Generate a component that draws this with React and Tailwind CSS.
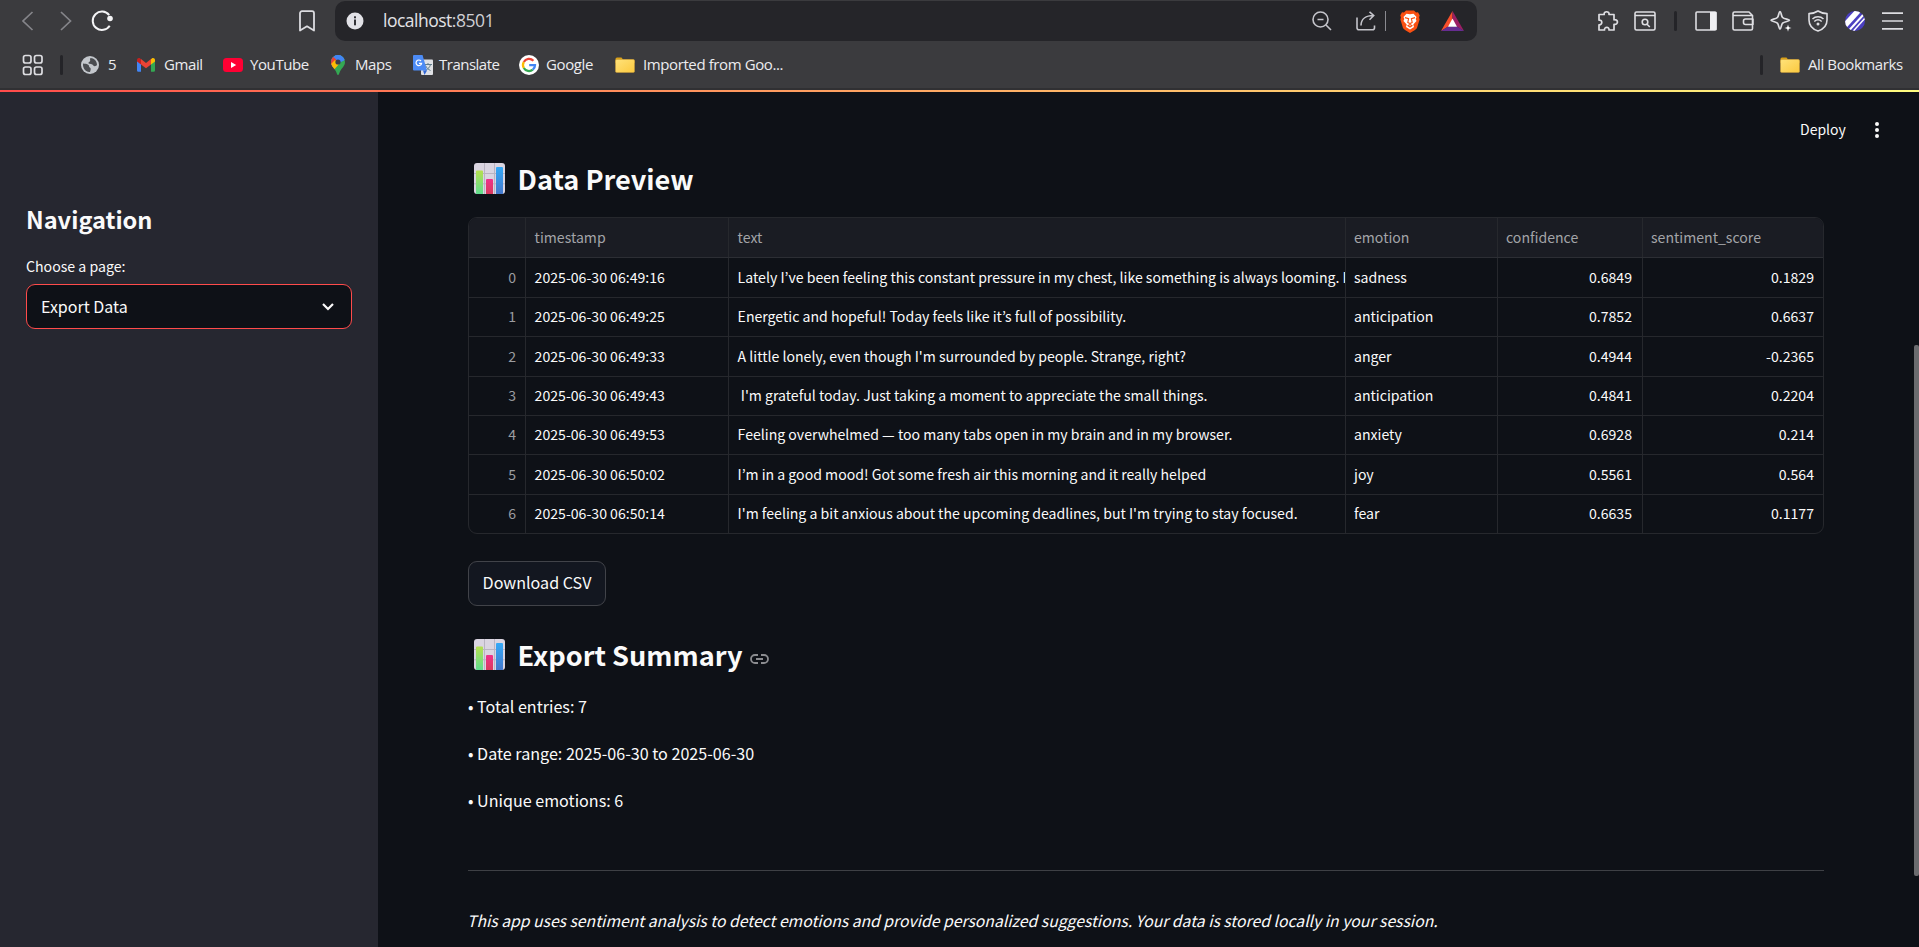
import React from "react";

const SS = "font-['Noto_Sans_CJK_KR',sans-serif]";

function Svg({ w, h, vb, className = "", children, ...rest }) {
  return (
    <svg width={w} height={h} viewBox={vb || `0 0 ${w} ${h}`} fill="none" className={"shrink-0 " + className} {...rest}>
      {children}
    </svg>
  );
}

function Folder({ className }) {
  return (
    <Svg w={20} h={16} className={className}>
      <path d="M0.5 2A1.5 1.5 0 0 1 2 0.5h4.5L8 2.5h10a1.5 1.5 0 0 1 1.500 1.500V6H0.500z" fill="#d9a017" />
      <rect x="0.500" y="2.500" width="19" height="13" rx="1.300" fill="url(#folder)" stroke="#c99a3a" strokeWidth="0.500" />
      <defs>
        <linearGradient id="folder" x1="0" y1="0" x2="1" y2="1">
          <stop stopColor="#ffe27a" />
          <stop offset="1" stopColor="#fbc93f" />
        </linearGradient>
      </defs>
    </Svg>
  );
}

function Toolbar() {
  return (
    <div className="flex h-[42px] items-center text-[#e8e8ec]">
      <Svg w={12} h={20} className="ml-[22px]"><path d="M10.500 1 1 10l9.500 9" stroke="#85858a" strokeWidth="1.700" /></Svg>
      <Svg w={12} h={20} className="ml-[26px]"><path d="M1 1l9.500 9L1 19" stroke="#85858a" strokeWidth="1.700" /></Svg>
      <Svg w={22} h={22} className="ml-[19px]">
        <path d="M18.700 15.700A9.200 9.200 0 1 1 18.200 5.100" stroke="#f4f4f6" strokeWidth="2" />
        <circle cx="19" cy="8.500" r="2.800" fill="#f4f4f6" />
      </Svg>
      <Svg w={16} h={22} className="ml-[186px]"><path d="M1 3.200A2 2 0 0 1 3 1.200h10a2 2 0 0 1 2 2V20.600l-7-4.300-7 4.300z" stroke="#dcdce0" strokeWidth="1.800" strokeLinejoin="round" /></Svg>
      <div className="ml-[20px] mt-px flex h-[40px] w-[1142px] items-center self-start rounded-[10px] bg-[#252529]">
        <Svg w={18} h={18} className="ml-[11px]">
          <circle cx="9" cy="9" r="8.500" fill="#e2e2e7" />
          <rect x="8" y="7.500" width="2" height="5.800" fill="#333338" />
          <rect x="8" y="4.300" width="2" height="2" fill="#333338" />
        </Svg>
        <span className="ml-[19px] block w-[920px] whitespace-nowrap pb-[2px] font-['Open_Sans',sans-serif] text-[17.500px] leading-[24px] tracking-[-0.500px] text-[#e2e2e6]"><span>localhost</span><span className="text-[#cfcfd4]">:8501</span></span>
        <Svg w={20} h={20} className="ml-[9px]">
          <circle cx="8.500" cy="8.500" r="7.500" stroke="#c4c4ca" strokeWidth="1.600" />
          <path d="M5.500 8.500h6M14 14l5 5" stroke="#c4c4ca" strokeWidth="1.600" />
        </Svg>
        <Svg w={20} h={20} className="ml-[24px]">
          <path d="M1 6.500V16.800a2 2 0 0 0 2 2h13.500a2 2 0 0 0 2-2V14.500M5 14.500C5 8 10 4.500 17.500 4.500M13.500 0.800 17.700 4.500l-4.200 4.200" stroke="#c4c4ca" strokeWidth="1.600" />
        </Svg>
        <div className="ml-[9px] h-[20px] w-px bg-[#8a8a90]" />
        <Svg w={20} h={23} className="ml-[14px]">
          <path d="M6 0.500h8l2 2 2-.2 1.700 3-.6 2.200.5 2-2.600 8.500c-.5 1.300-3.500 3-7 5-3.500-2-6.500-3.700-7-5L.4 9.500l.5-2L.3 5.300l1.700-3 2 .2z" fill="#fb5012" />
          <path d="M6.500 3.700 10 4.300l3.500-.6 3 3.300-.8 2 .8 2-3.200 3.600L14 17l-4 2.600L6 17l.7-2.400L3.500 11l.8-2-.8-2z" fill="#fff" />
          <path d="M5 7.600l3.600 1-.8 3.800L10 13.600l2.200-1.200-.8-3.800 3.600-1M8 15.800l2-1.300 2 1.300-2 1.200z" stroke="#fb5012" strokeWidth="1.100" />
        </Svg>
        <Svg w={23} h={20} className="ml-[21px]">
          <path d="M11.500 0 0 20 11.500 13z" fill="#f94f2a" />
          <path d="M11.500 0 23 20 11.500 13z" fill="#9b1f63" />
          <path d="M0 20h23l-7-4.500H7z" fill="#662d91" />
          <path d="M11.500 7.500 16 15.800H7z" fill="#fff" />
        </Svg>
      </div>
      <Svg w={22} h={22} className="ml-[120px]">
        <path d="M2 4.500h5.200c-.8-3.700 5.600-3.700 4.800 0h5v5.300c4.600-.8 4.600 5.300 0 4.500v5.700h-5c.6-3.600-5-3.600-4.500 0H2v-5.200c3.700.4 3.700-5.200 0-4.700z" stroke="#dedee2" strokeWidth="1.700" strokeLinejoin="round" />
      </Svg>
      <Svg w={22} h={20} className="ml-[15px]">
        <rect x="1" y="1" width="20" height="18" rx="1.500" stroke="#dedee2" strokeWidth="1.600" />
        <path d="M1 4.500h20M12.800 13l3 3" stroke="#dedee2" strokeWidth="1.600" />
        <circle cx="11" cy="11" r="2.800" stroke="#dedee2" strokeWidth="1.600" />
      </Svg>
      <div className="ml-[18px] h-[20px] w-[3px] rounded bg-[#242428]" />
      <Svg w={22} h={20} className="ml-[18px]">
        <rect x="1" y="1" width="20" height="18" rx="1" stroke="#dedee2" strokeWidth="1.600" />
        <rect x="15" y="1" width="6.500" height="18" fill="#f0f0f3" />
      </Svg>
      <Svg w={22} h={20} className="ml-[15px]">
        <path d="M1 2.500A1.500 1.500 0 0 1 2.500 1H17l3.500 3.500V17.500A1.500 1.500 0 0 1 19 19H2.500A1.500 1.500 0 0 1 1 17.500zM1 4.500h19M21 8h-7.500a2 2 0 0 0-2 2v1.500a2 2 0 0 0 2 2H21z" stroke="#dedee2" strokeWidth="1.600" strokeLinejoin="round" />
      </Svg>
      <Svg w={22} h={22} className="ml-[16px]">
        <path d="M10 1.500c1.200 0 1.100 4.500 2.600 6S19.500 9.300 19.500 10.300s-5.400 1.300-6.900 2.800-1.400 6-2.600 6-1.100-4.500-2.600-6S1 11.300 1 10.300s4.900-1.300 6.400-2.800S8.800 1.500 10 1.500z" stroke="#dedee2" strokeWidth="1.700" />
        <path d="M18 14.500l1 2.500 2.500 1-2.500 1-1 2.700-1-2.700-2.500-1 2.500-1z" fill="#fff" stroke="#3b3b3e" strokeWidth="0.300" />
      </Svg>
      <Svg w={20} h={22} className="ml-[16px]">
        <path d="M10 1c3 2 6 2.600 9 2.600V10c0 5-3 9-9 11-6-2-9-6-9-11V3.600C4 3.600 7 3 10 1z" stroke="#dedee2" strokeWidth="1.600" strokeLinejoin="round" />
        <path d="M4.500 9c3-3 8-3 11 0M6.300 11.500c2.200-2 5.200-2 7.400 0" stroke="#dedee2" strokeWidth="1.500" />
        <circle cx="10" cy="14" r="1.500" fill="#dedee2" />
      </Svg>
      <Svg w={20} h={20} className="ml-[17px]">
        <defs><clipPath id="ball"><circle cx="10" cy="10" r="10" /></clipPath></defs>
        <g clipPath="url(#ball)">
          <rect width="20" height="20" fill="#4a3fc0" />
          <path d="M-1 15.500 14-1" stroke="#fff" strokeWidth="5.500" />
          <path d="M4 19.500 19.500 2.500" stroke="#fff" strokeWidth="2" />
          <path d="M7.500 21 21 6" stroke="#fff" strokeWidth="1.500" />
        </g>
      </Svg>
      <Svg w={21} h={18} className="ml-[17px]"><path d="M0 1.200h21M0 9h21M0 16.800h21" stroke="#dcdce0" strokeWidth="1.700" /></Svg>
    </div>
  );
}

const bm = "whitespace-nowrap font-['Open_Sans',sans-serif] text-[15px] leading-[20px] tracking-[-0.400px] text-[#ececef] pb-[2px] ";

function Bookmarks() {
  return (
    <div className="flex h-[46px] items-center">
      <Svg w={21} h={22} className="ml-[22px]">
        {[1.500, 12.500].map((x) => [1.500, 13].map((y) => (
          <rect key={x + "-" + y} x={x} y={y} width="7.500" height="7.500" rx="2" stroke="#dedee2" strokeWidth="1.700" />
        )))}
      </Svg>
      <div className="ml-[17px] h-[20px] w-[3px] rounded bg-[#242428]" />
      <Svg w={18} h={18} className="ml-[18px]">
        <circle cx="9" cy="9" r="9" fill="#c3c7cc" />
        <path d="M2 7.500c2 .3 4 .2 5.500 1.500 1 1 .2 2 1.300 2.600 1.200.6 1.200 2 .2 4.400C5 16.500 1.500 12.500 2 7.500zM9.500 2c-1.200 1.500.3 2-.5 3.200-.5.8-1.700.8-1.500 2 .3 1.200 2 .6 3.300 1 1.500.5 1.500 2 3 2 1 0 1.600-.6 2.200-1.200C16 5 13 2 9.500 2z" fill="#4a4c50" />
      </Svg>
      <span className={bm + "ml-[9px] w-[29px]"}>5</span>
      <Svg w={18} h={14} vb="0 0 18 14">
        <path d="M0 2v10.500A1.300 1.300 0 0 0 1.300 13.700H4V5.500z" fill="#4285f4" />
        <path d="M18 2v10.500a1.300 1.300 0 0 1-1.300 1.200H14V5.500z" fill="#34a853" />
        <path d="M14 1.200V6.500l4-3V2c0-1.700-1.900-2.500-3.200-1.500z" fill="#fbbc04" />
        <path d="M4 1.200V6.500L0 3.500V2C0 .300 1.900-.500 3.200.500z" fill="#c5221f" />
        <path d="M4 6.500V1.100l5 3.800 5-3.800v5.400l-5 3.800z" fill="#ea4335" />
      </Svg>
      <span className={bm + "ml-[9px] w-[59px]"}>Gmail</span>
      <Svg w={20} h={14}><rect width="20" height="14" rx="3.500" fill="#ff0033" /><path d="M8 4l5.200 3L8 10z" fill="#fff" /></Svg>
      <span className={bm + "ml-[7px] w-[81px]"}>YouTube</span>
      <Svg w={14} h={20}>
        <defs><clipPath id="pin"><path d="M7 0a7 7 0 0 1 7 7c0 4-3.200 6-5 9.500C8 18.500 8 20 7 20s-1-1.500-2-3.500C3.200 13 0 11 0 7a7 7 0 0 1 7-7z" /></clipPath></defs>
        <g clipPath="url(#pin)">
          <rect width="14" height="20" fill="#34a853" />
          <path d="M0 14 14-2V-2H0z" fill="#4285f4" />
          <path d="M0 0l7 6-7 8z" fill="#ea4335" />
          <path d="M0 9 4 5l4 4-6 7z" fill="#fbbc04" />
          <path d="M3 0h11v5L8 8 5 4z" fill="#4285f4" />
        </g>
        <circle cx="7" cy="7" r="2.600" fill="#3a3d4a" />
      </Svg>
      <span className={bm + "ml-[10px] w-[58px]"}>Maps</span>
      <Svg w={20} h={20}>
        <rect x="8" y="4.500" width="12" height="15.500" rx="1" fill="#dfe1e5" />
        <path d="M11 9.500h8M15 8v1.500M17.500 9.500c-.5 2.500-2.500 4.500-5 6M12.500 10.500c1 2.500 3 4 5 5" stroke="#607d8b" strokeWidth="1" />
        <path d="M1 0h8.500l4.500 15.500H1a1 1 0 0 1-1-1V1a1 1 0 0 1 1-1z" fill="#4c8bf5" />
        <path d="M10 15.500h4L11.500 20z" fill="#3367d6" />
        <path d="M8 6A2.800 2.800 0 1 0 8.600 8.300H6" stroke="#fff" strokeWidth="1.200" />
      </Svg>
      <span className={bm + "ml-[6px] w-[80px] tracking-[-0.500px]"}>Translate</span>
      <Svg w={20} h={20}>
        <circle cx="10" cy="10" r="10" fill="#fff" />
        <path d="M14.400 5.800A6 6 0 0 0 4.800 7" stroke="#ea4335" strokeWidth="2.300" />
        <path d="M4.800 7a6 6 0 0 0 0 6" stroke="#fbbc04" strokeWidth="2.300" />
        <path d="M4.800 13a6 6 0 0 0 9 1.700" stroke="#34a853" strokeWidth="2.300" />
        <path d="M13.800 14.700A6 6 0 0 0 16 10.200H10.200" stroke="#4285f4" strokeWidth="2.300" />
      </Svg>
      <span className={bm + "ml-[7px] w-[69px]"}>Google</span>
      <Folder />
      <span className={bm + "ml-[8px] w-[160px]"}>Imported from Goo...</span>
      <div className="ml-auto h-[20px] w-[3px] rounded bg-[#242428]" />
      <Folder className="ml-[17px]" />
      <span className={bm + "ml-[8px] w-[111px]"}>All Bookmarks</span>
    </div>
  );
}

function ChartEmoji() {
  return (
    <Svg w={31} h={31} className="ml-[6px]">
      <defs>
        <linearGradient id="g1" x1="0" y1="0" x2="0" y2="1"><stop stopColor="#b6e04f" /><stop offset="1" stopColor="#5fdc8f" /></linearGradient>
        <linearGradient id="g2" x1="0" y1="0" x2="0" y2="1"><stop stopColor="#f0308c" /><stop offset="1" stopColor="#d93a5c" /></linearGradient>
        <linearGradient id="g3" x1="0" y1="0" x2="0" y2="1"><stop stopColor="#34a9f7" /><stop offset="1" stopColor="#4478cc" /></linearGradient>
        <clipPath id="em"><rect width="31" height="31" rx="3" /></clipPath>
      </defs>
      <g clipPath="url(#em)">
        <rect width="31" height="31" fill="#dad5e1" />
        <path d="M10.500 0v31M20.500 0v31M0 10.500h31M0 20.800h31" stroke="#b9b4c2" strokeWidth="1" />
        <path d="M2 31V8.500a1 1 0 0 1 1-1h5a1 1 0 0 1 1 1V31z" fill="url(#g1)" />
        <path d="M12 31V17a1 1 0 0 1 1-1h5a1 1 0 0 1 1 1v14z" fill="url(#g2)" />
        <path d="M22 31V5a1 1 0 0 1 1-1h5a1 1 0 0 1 1 1v26z" fill="url(#g3)" />
      </g>
    </Svg>
  );
}

const rows = [
  ["0", "2025-06-30 06:49:16", "Lately I’ve been feeling this constant pressure in my chest, like something is always looming. I", "sadness", "0.6849", "0.1829", "h-[40px]"],
  ["1", "2025-06-30 06:49:25", "Energetic and hopeful! Today feels like it’s full of possibility.", "anticipation", "0.7852", "0.6637", "h-[39px]"],
  ["2", "2025-06-30 06:49:33", "A little lonely, even though I'm surrounded by people. Strange, right?", "anger", "0.4944", "-0.2365", "h-[40px]"],
  ["3", "2025-06-30 06:49:43", " I'm grateful today. Just taking a moment to appreciate the small things.", "anticipation", "0.4841", "0.2204", "h-[39px]"],
  ["4", "2025-06-30 06:49:53", "Feeling overwhelmed — too many tabs open in my brain and in my browser.", "anxiety", "0.6928", "0.214", "h-[39px]"],
  ["5", "2025-06-30 06:50:02", "I’m in a good mood! Got some fresh air this morning and it really helped", "joy", "0.5561", "0.564", "h-[40px]"],
  ["6", "2025-06-30 06:50:14", "I'm feeling a bit anxious about the upcoming deadlines, but I'm trying to stay focused.", "fear", "0.6635", "0.1177", "h-[38px]"],
];

const gridCols = "grid grid-cols-[57px_203px_617px_152px_145px_180px] ";
const base = "flex items-center overflow-hidden whitespace-pre border-r border-[#26282d] ";
const cell = base + "pl-[8.600px] ";
const cellTight = base + "pl-[8px] ";

function Table() {
  return (
    <div className="mt-[20px] w-[1356px] overflow-hidden rounded-[9px] border border-[#26282d] text-[14.100px] text-[#fafafa]">
      <div className={gridCols + "h-[40px] border-b border-[#2c2e34] bg-[#1a1c23] text-[#a3a4a8]"}>
        {["", "timestamp", "text", "emotion", "confidence", "sentiment_score"].map((h, i) => (
          <div key={h} className={(i > 2 ? cellTight : cell) + (i === 5 ? "border-r-0" : "")}>{h}</div>
        ))}
      </div>
      {rows.map((r, i) => (
        <div key={r[0]} className={gridCols + r[6] + (i === 6 ? "" : " border-b border-[#26282d]")}>
          <div className={cell + "justify-end pr-[9px] text-[#9b9ca0]"}>{r[0]}</div>
          <div className={cell}>{r[1]}</div>
          <div className={cell}>{r[2]}</div>
          <div className={cellTight}>{r[3]}</div>
          <div className={cell + "justify-end pr-[10px]"}>{r[4]}</div>
          <div className={cell + "justify-end border-r-0 pr-[9px]"}>{r[5]}</div>
        </div>
      ))}
    </div>
  );
}

export default function App() {
  return (
    <div className={"flex h-[947px] w-[1919px] flex-col overflow-hidden bg-[#3b3b3e] " + SS}>
      <Toolbar />
      <Bookmarks />
      <div className="h-[2px] shrink-0 bg-[#303033]" />
      <div className="h-[2px] shrink-0 bg-gradient-to-r from-[#ff4b4b] to-[#fffd80]" />
      <div className="flex min-h-0 flex-1 text-[#fafafa]">
        <aside className="flex w-[378px] shrink-0 flex-col bg-[#262730] pl-[26px] pr-[26px] pt-[111px]">
          <h2 className="text-[23.600px] font-bold leading-[32px]">Navigation</h2>
          <div className="mt-[19px] text-[14.150px] leading-[24px]">Choose a page:</div>
          <div className="mt-[6px] flex h-[45px] items-center justify-between rounded-[9px] border border-[#ff4b4b] bg-[#0e1117] pl-[14px] pr-[17px] text-[16px]">
            <span className="pb-[2px]">Export Data</span>
            <Svg w={12} h={8}><path d="M1 1l5 5 5-5" stroke="#fafafa" strokeWidth="2.200" /></Svg>
          </div>
        </aside>
        <main className="relative min-w-0 flex-1 bg-[#0e1117] pl-[90px]">
          <div className="flex h-[68px] items-center pl-[1332px] pt-[8px] text-[14px]">
            <span className="pb-[2px]">Deploy</span>
            <Svg w={4} h={16} className="ml-[29px]"><path d="M2 2h0M2 8h0M2 14h0" stroke="#fafafa" strokeWidth="4" strokeLinecap="round" /></Svg>
          </div>
          <div className="flex h-[37px] items-center text-[27.150px] font-bold">
            <ChartEmoji /><span className="ml-[12.500px] pt-[2px]">Data Preview</span>
          </div>
          <Table />
          <div className="mt-[27px] flex h-[45px] w-[138px] items-center justify-center rounded-[9px] border border-[#414349] bg-[#131720] pb-[2px] text-[16.100px]">Download CSV</div>
          <div className="mt-[30px] flex h-[37px] items-center text-[27.150px] font-bold">
            <ChartEmoji /><span className="ml-[12.500px] pt-[2px]">Export Summary</span>
            <Svg w={19} h={10} className="ml-[8px] mt-[9px]"><path d="M8 1H5a4 4 0 0 0 0 8h3M11 1h3a4 4 0 0 1 0 8h-3M6 5h7" stroke="#8b8c90" strokeWidth="1.800" /></Svg>
          </div>
          <div className="mt-[19px] flex flex-col gap-[19px] text-[16.120px] leading-[28px]">
            <p>• Total entries: 7</p>
            <p>• Date range: 2025-06-30 to 2025-06-30</p>
            <p>• Unique emotions: 6</p>
          </div>
          <div className="mt-[56px] h-px w-[1356px] bg-[#3e4045]" />
          <p className="-ml-px mt-[36px] text-[15.730px] italic leading-[28px]">This app uses sentiment analysis to detect emotions and provide personalized suggestions. Your data is stored locally in your session.</p>
          <div className="absolute right-0 top-[253px] h-[531px] w-[5px] rounded-[2px] bg-[#6b6c6f]" />
        </main>
      </div>
    </div>
  );
}
